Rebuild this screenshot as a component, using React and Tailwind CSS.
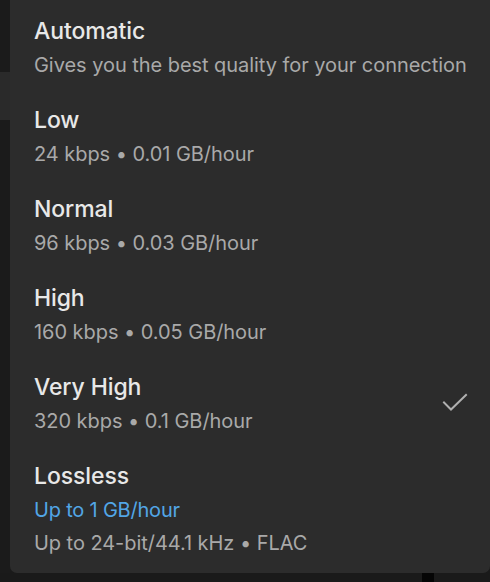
import React from "react";

const items = [
  { title: "Automatic", lines: ["Gives you the best quality for your connection"] },
  { title: "Low", lines: ["24 kbps • 0.01 GB/hour"] },
  { title: "Normal", lines: ["96 kbps • 0.03 GB/hour"] },
  { title: "High", lines: ["160 kbps • 0.05 GB/hour"] },
  { title: "Very High", lines: ["320 kbps • 0.1 GB/hour"], checked: true },
  { title: "Lossless", blue: "Up to 1 GB/hour", lines: ["Up to 24-bit/44.1 kHz • FLAC"], last: true },
];

function Check() {
  return (
    <svg width="26" height="20" viewBox="0 0 26 20" fill="none">
      <path d="M2 9.5 L9 16.5 L24 2" stroke="#b0b0b0" strokeWidth="2" strokeLinecap="square" />
    </svg>
  );
}

export default function App() {
  return (
    <div
      className="w-[490px] h-[582px] flex flex-col bg-[#1a1a1a] overflow-hidden"
      style={{ fontFamily: "Inter, 'Noto Sans', sans-serif" }}
    >
      <div className="flex flex-1">
        <div className="w-[10px] flex flex-col">
          <div className="h-[72px] bg-[#1b1b1b]" />
          <div className="h-[48px] bg-[#2a2a2a]" />
          <div className="flex-1 bg-[#1b1b1b]" />
        </div>
        <div className="flex-1 bg-[#2c2c2c] rounded-b-[7px] flex flex-col">
          {items.map((it) => (
            <div
              key={it.title}
              className={`flex items-center pl-[24px] pr-[22px] pt-[17px] ${it.last ? "pb-[18px]" : "pb-[12px]"}`}
            >
              <div className="flex-1 flex flex-col">
                <div className="text-[23px] leading-[28px] text-[#e8e8e8] font-medium tracking-[-0.1px]">
                  {it.title}
                </div>
                {it.blue && (
                  <div className="mt-[8px] text-[20px] leading-[24px] text-[#52a6e6] tracking-[-0.2px]">
                    {it.blue}
                  </div>
                )}
                {it.lines.map((l) => (
                  <div
                    key={l}
                    className={`${it.blue ? "mt-[9px]" : "mt-[8px]"} text-[20px] leading-[24px] text-[#a9a9a9] tracking-[-0.05px]`}
                  >
                    {l}
                  </div>
                ))}
              </div>
              {it.checked && <Check />}
            </div>
          ))}
        </div>
      </div>
      <div className="h-[9px] flex bg-[#1a1a1a]">
        <div className="w-[422px]" />
        <div className="w-[12px] bg-[#050505]" />
      </div>
    </div>
  );
}
